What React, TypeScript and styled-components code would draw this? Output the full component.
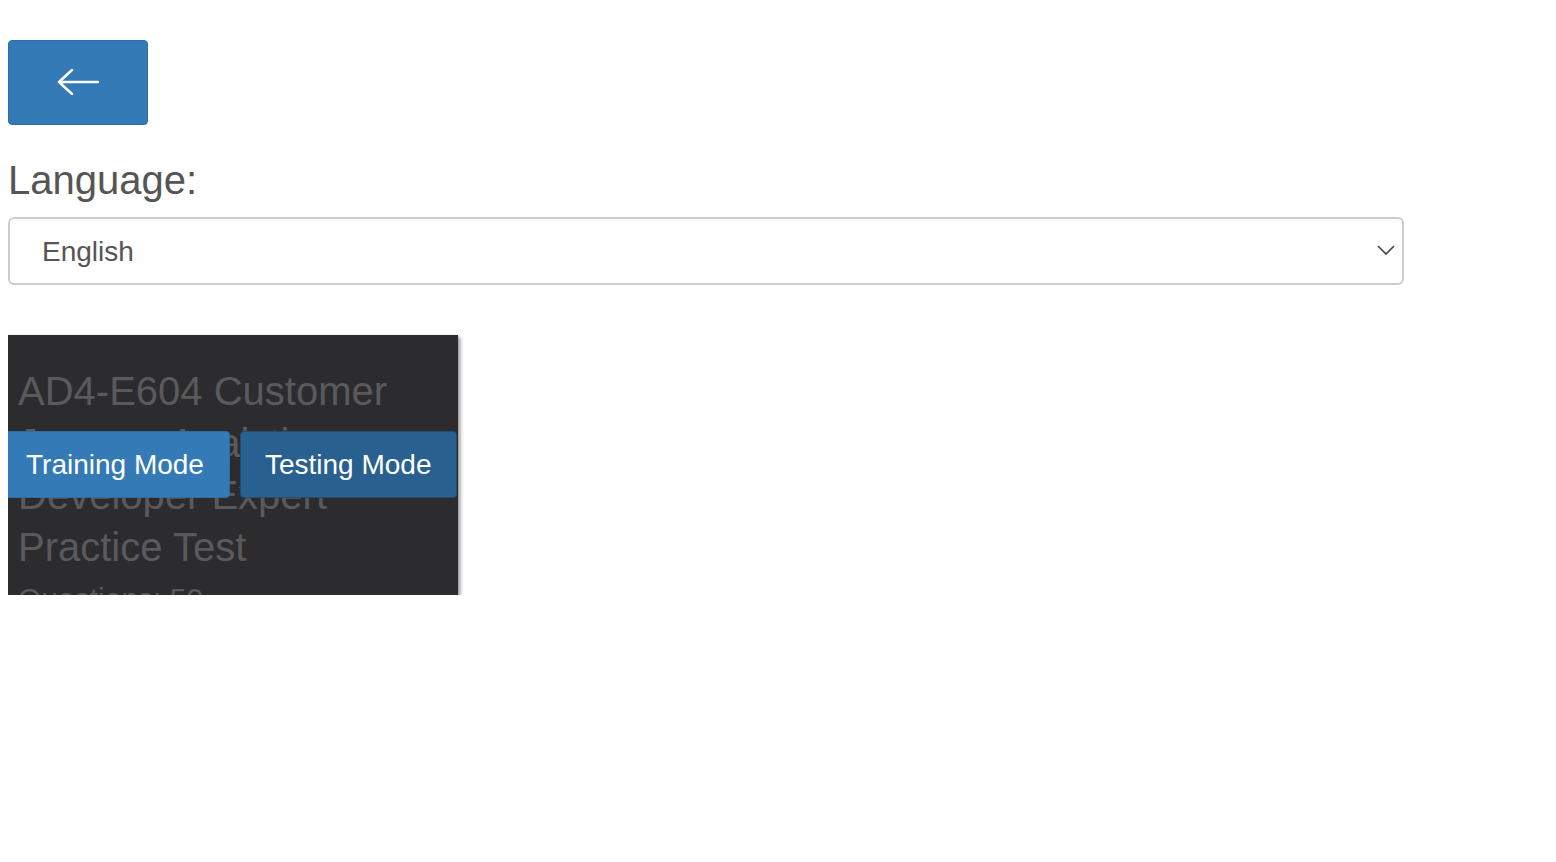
import React from 'react';
import styled, { createGlobalStyle } from 'styled-components';

const GlobalStyle = createGlobalStyle`
	body {
		margin: 8px;
		background: #fff;
		font-family: 'Liberation Sans', Arial, Helvetica, sans-serif;
		color: #555;
	}
`;

const Page = styled.div`
	display: flex;
	flex-direction: column;
	align-items: flex-start;
`;

const BackButton = styled.button`
	display: flex;
	align-items: center;
	justify-content: center;
	margin-top: 32px;
	width: 140px;
	height: 85px;
	background: #337ab7;
	border: 1px solid #2e6da4;
	border-radius: 4px;
	cursor: pointer;
	padding: 0 0 2px;
`;

const Label = styled.label`
	margin-top: 33px;
	font-size: 40px;
	line-height: 44px;
	color: #555;
`;

const SelectWrap = styled.div`
	position: relative;
	margin-top: 15px;
	width: 1396px;
`;

const Select = styled.select`
	appearance: none;
	-webkit-appearance: none;
	width: 100%;
	height: 68px;
	box-sizing: border-box;
	padding: 0 60px 0 32px;
	font-family: 'Liberation Sans', Arial, sans-serif;
	font-size: 28px;
	color: #555;
	background: #fff;
	border: 2px solid #ccc;
	border-radius: 6px;
	outline: none;
`;

const Chevron = styled.svg`
	position: absolute;
	right: 9px;
	top: 27px;
	pointer-events: none;
`;

const Card = styled.div`
	position: relative;
	margin: 50px 0 0 -8px;
	width: 458px;
	height: 260px;
	box-sizing: border-box;
	padding: 30px 18px 0;
	background: #2c2c2e;
	box-shadow: 2px 2px 4px rgba(0, 0, 0, 0.45);
	overflow: hidden;
`;

const Title = styled.h2`
	margin: 0;
	font-size: 40px;
	line-height: 52px;
	font-weight: normal;
	color: #5a5a5c;
`;

const Meta = styled.div`
	margin-top: 6px;
	font-size: 30px;
	line-height: 40px;
	color: #5a5a5c;
`;

const ModeRow = styled.div`
	position: absolute;
	top: 96px;
	left: 0;
	display: flex;
	gap: 10px;
	white-space: nowrap;
`;

const ModeButton = styled.button<{ $active?: boolean }>`
	flex-shrink: 0;
	height: 67px;
	padding: 0 ${(p) => (p.$active ? '24px' : '25px')};
	font-family: 'Liberation Sans', Arial, sans-serif;
	font-size: 28px;
	white-space: nowrap;
	color: #fff;
	background: ${(p) => (p.$active ? '#286090' : '#337ab7')};
	border: 1px solid ${(p) => (p.$active ? '#204d74' : '#2e6da4')};
	border-radius: 4px;
	cursor: pointer;
`;

export default function App(): JSX.Element {
	return (
		<Page>
			<GlobalStyle />
			<BackButton aria-label="Back">
				<svg width="42" height="26" viewBox="0 0 42 26" fill="none">
					<path
						d="M41 13H2 M15 1 L2 13 L15 25"
						stroke="#fff"
						strokeWidth="2.4"
						strokeLinecap="round"
						strokeLinejoin="round"
					/>
				</svg>
			</BackButton>

			<Label htmlFor="lang">Language:</Label>
			<SelectWrap>
				<Select id="lang" defaultValue="en">
					<option value="en">English</option>
				</Select>
				<Chevron width="18" height="12" viewBox="0 0 18 12" fill="none">
					<path d="M1 2 L9 10 L17 2" stroke="#444" strokeWidth="1.6" />
				</Chevron>
			</SelectWrap>

			<Card>
				<Title>AD4-E604 Customer Journey Analytics Developer Expert Practice Test</Title>
				<Meta>Questions: 50</Meta>
				<ModeRow>
					<ModeButton>Training Mode</ModeButton>
					<ModeButton $active>Testing Mode</ModeButton>
				</ModeRow>
			</Card>
		</Page>
	);
}
